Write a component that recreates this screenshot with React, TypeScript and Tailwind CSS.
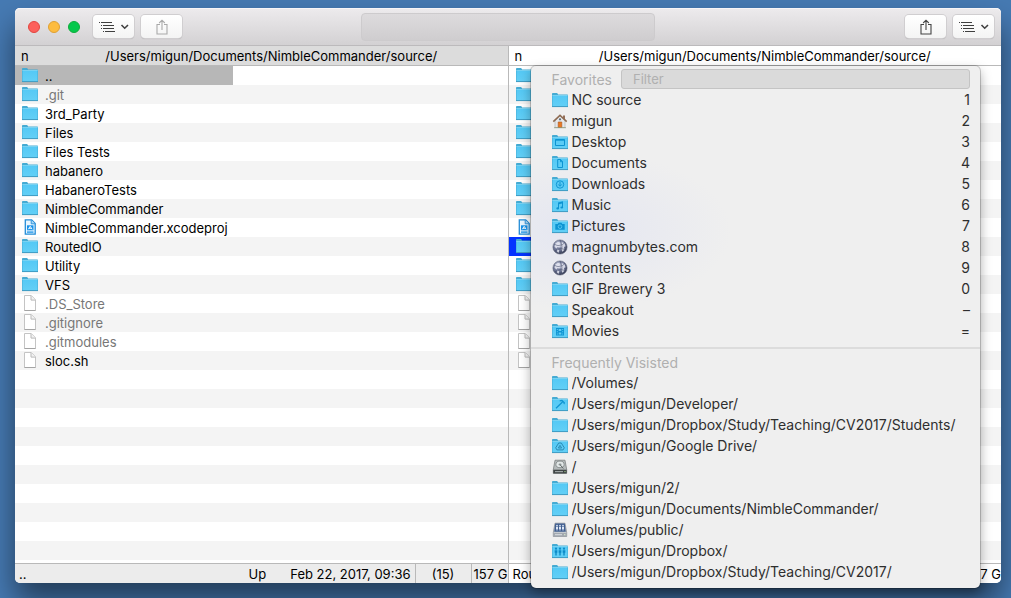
import { useState, type ReactNode } from "react";
import clsx from "clsx";

type Glyph =
  | "desktop"
  | "document"
  | "download"
  | "music"
  | "camera"
  | "film"
  | "hammer"
  | "drive"
  | "people";

type IconName = "folder" | "project" | "file" | "home" | "globe" | "disk" | "netdisk" | Glyph;

interface Entry {
  name: string;
  icon: IconName;
  hidden?: boolean;
}

interface Place {
  label: string;
  icon: IconName;
  shortcut?: string;
}

const PATH = "/Users/migun/Documents/NimbleCommander/source/";

const ENTRIES: Entry[] = [
  { name: "..", icon: "folder" },
  { name: ".git", icon: "folder", hidden: true },
  { name: "3rd_Party", icon: "folder" },
  { name: "Files", icon: "folder" },
  { name: "Files Tests", icon: "folder" },
  { name: "habanero", icon: "folder" },
  { name: "HabaneroTests", icon: "folder" },
  { name: "NimbleCommander", icon: "folder" },
  { name: "NimbleCommander.xcodeproj", icon: "project" },
  { name: "RoutedIO", icon: "folder" },
  { name: "Utility", icon: "folder" },
  { name: "VFS", icon: "folder" },
  { name: ".DS_Store", icon: "file", hidden: true },
  { name: ".gitignore", icon: "file", hidden: true },
  { name: ".gitmodules", icon: "file", hidden: true },
  { name: "sloc.sh", icon: "file" },
];

const ROW_COUNT = 26;

const FAVORITES: Place[] = [
  { label: "NC source", icon: "folder", shortcut: "1" },
  { label: "migun", icon: "home", shortcut: "2" },
  { label: "Desktop", icon: "desktop", shortcut: "3" },
  { label: "Documents", icon: "document", shortcut: "4" },
  { label: "Downloads", icon: "download", shortcut: "5" },
  { label: "Music", icon: "music", shortcut: "6" },
  { label: "Pictures", icon: "camera", shortcut: "7" },
  { label: "magnumbytes.com", icon: "globe", shortcut: "8" },
  { label: "Contents", icon: "globe", shortcut: "9" },
  { label: "GIF Brewery 3", icon: "folder", shortcut: "0" },
  { label: "Speakout", icon: "folder", shortcut: "–" },
  { label: "Movies", icon: "film", shortcut: "=" },
];

const FREQUENT: Place[] = [
  { label: "/Volumes/", icon: "folder" },
  { label: "/Users/migun/Developer/", icon: "hammer" },
  { label: "/Users/migun/Dropbox/Study/Teaching/CV2017/Students/", icon: "folder" },
  { label: "/Users/migun/Google Drive/", icon: "drive" },
  { label: "/", icon: "disk" },
  { label: "/Users/migun/2/", icon: "folder" },
  { label: "/Users/migun/Documents/NimbleCommander/", icon: "folder" },
  { label: "/Volumes/public/", icon: "netdisk" },
  { label: "/Users/migun/Dropbox/", icon: "people" },
  { label: "/Users/migun/Dropbox/Study/Teaching/CV2017/", icon: "folder" },
];

const GLYPHS: Record<Glyph, ReactNode> = {
  desktop: <path d="M3.5 5.5h9v6h-9zM3.5 6.2h9" fill="none" stroke="#0d94d2" />,
  document: (
    <path d="M5.7 4.5h3l1.8 2v6H5.7zM8.5 4.5v2.2h2" fill="none" stroke="#0d94d2" />
  ),
  download: (
    <g fill="none" stroke="#0d94d2">
      <circle cx="8" cy="8.5" r="3.7" />
      <path d="M8 6v4M6.2 8.4 8 10.3l1.8-1.9" />
    </g>
  ),
  music: (
    <g fill="#0d94d2">
      <path d="M6 5.5 11 4.3v6h-1V6.6L7 7.3v4H6z" />
      <ellipse cx="5.7" cy="11.4" rx="1.4" ry="1.1" />
      <ellipse cx="9.8" cy="10.5" rx="1.4" ry="1.1" />
    </g>
  ),
  camera: (
    <g fill="#0d94d2">
      <path d="M3.3 6h2.4l.8-1.3h3L10.3 6h2.4v5.7H3.3z" />
      <circle cx="8" cy="8.7" r="1.8" fill="none" stroke="#58c8f3" strokeWidth=".9" />
    </g>
  ),
  film: (
    <g fill="#0d94d2">
      <path d="M4 5h8v7.5H4z" />
      <path
        d="M4.8 5.9h1v1h-1zM4.8 8.2h1v1h-1zM4.8 10.6h1v1h-1zM10.2 5.9h1v1h-1zM10.2 8.2h1v1h-1zM10.2 10.6h1v1h-1zM6.7 6h2.6v2H6.7zM6.7 9.4h2.6v2H6.7z"
        fill="#62cdf5"
      />
    </g>
  ),
  hammer: (
    <path d="M4 12.2 10.5 6M7.7 4.8l2.2-.3 2.4 2.3-.3 1.4" fill="none" stroke="#0d94d2" strokeWidth="1.2" />
  ),
  drive: (
    <path
      d="M6.7 5h2.6l3 4.8-1.2 2.1H4.9L3.7 9.8zM8 7.3 6.4 10h3.2z"
      fill="none"
      stroke="#2583ad"
      strokeWidth=".9"
    />
  ),
  people: (
    <g fill="#0d8bc7">
      <circle cx="4" cy="5.7" r="1.1" />
      <circle cx="8" cy="5.7" r="1.1" />
      <circle cx="12" cy="5.7" r="1.1" />
      <path d="M2.7 7.3h2.6v2.5h-.6v2.7H3.3V9.8h-.6zM6.7 7.3h2.6v2.5h-.6v2.7H7.3V9.8h-.6zM10.7 7.3h2.6v2.5h-.6v2.7h-1.4V9.8h-.6z" />
    </g>
  ),
};

function Folder({ glyph }: { glyph?: Glyph }) {
  return (
    <svg viewBox="0 0 16 16" className="size-4 shrink-0" aria-hidden="true">
      <path d="M0 2q0-.9.8-.9h4q.5 0 .8.5l.5.8h9.2q.7 0 .7.7V15H0z" fill="#45abd3" />
      <path d="M.5 4h15v10.3H.5z" fill="url(#folder-front)" />
      <path d="M.3 3.5h15.4" stroke="#86dcfa" strokeWidth=".8" />
      <path d="M0 14.6h16" stroke="#3d97bd" strokeWidth=".8" />
      {glyph && GLYPHS[glyph]}
    </svg>
  );
}

function Icon({ name }: { name: IconName }) {
  switch (name) {
    case "folder":
      return <Folder />;
    case "file":
      return (
        <svg viewBox="0 0 16 16" className="size-4 shrink-0" aria-hidden="true">
          <path d="M2.5.5h6.8l4.2 4.3v10.7h-11z" fill="#fff" stroke="#c4c4c4" />
          <path d="M9 .8v4.3h4.3" fill="#f1f1f1" stroke="#b9b9b9" />
          <path d="M2.5 15.5h11" stroke="#a4a4a4" />
        </svg>
      );
    case "project":
      return (
        <svg viewBox="0 0 16 16" className="size-4 shrink-0" aria-hidden="true">
          <path d="M3.3.8h6.4l3.5 3.6v10.8H3.3z" fill="#e9f6ff" stroke="#258dd8" strokeWidth="1.3" />
          <path d="M9.2 1v3.8H13" fill="#a8d8f7" stroke="#258dd8" strokeWidth=".9" />
          <path d="M5 6.3h6.5v5H5z" fill="#1792ea" />
          <path d="m6.3 10.3 1.9-3 1.9 3M6.9 9.3h2.7" fill="none" stroke="#fff" strokeWidth=".9" />
          <path d="M5 13.1h6.5" stroke="#1792ea" strokeWidth="1.3" />
        </svg>
      );
    case "home":
      return (
        <svg viewBox="0 0 16 16" className="size-4 shrink-0" aria-hidden="true">
          <path d="M11 2.5h2V6h-2z" fill="#94705c" />
          <path d="M3 8l5-5 5 5v6.5H3z" fill="#e4e7ea" stroke="#a7a9ab" strokeWidth=".6" />
          <path d="M1.3 8.6 8 2.2l6.7 6.4" fill="none" stroke="#8e6a50" strokeWidth="1.5" />
          <path d="M6.2 9h3.6v5.5H6.2z" fill="#e87922" stroke="#a95420" strokeWidth=".6" />
          <circle cx="8" cy="6.3" r="1.1" fill="#5e6873" />
          <path d="M2 14.7h12" stroke="#8b9a78" strokeWidth=".8" />
        </svg>
      );
    case "globe":
      return (
        <svg viewBox="0 0 16 16" className="size-4 shrink-0" aria-hidden="true">
          <circle cx="8" cy="8" r="7.1" fill="url(#globe)" stroke="#50566d" strokeWidth=".5" />
          <path
            d="M3.3 4.5 6 2.7l2.5 1-1 1.8 1.6 1-1.7 2-2-.6-1 1.6-1.8-1.8zM9.5 3l2.9 1.1 1.2 3.1-1.6.7.4 2.8-1.8 2-1.5-1.9.6-2.6-1.3-1.5zM5.3 10l2 1.2-.6 2.5-1.6-1z"
            fill="#e6e8f2"
            opacity=".85"
          />
          <path d="M3 11.8Q8 8 13.8 11M2 5Q8 9 13 3.4M8 1q4 7 0 14" fill="none" stroke="#3e4663" strokeWidth=".5" />
        </svg>
      );
    case "disk":
      return (
        <svg viewBox="0 0 16 16" className="size-4 shrink-0" aria-hidden="true">
          <path d="M3 1.2h10l1.7 9.3v3.8H1.3v-3.8z" fill="#b5babb" stroke="#747979" strokeWidth=".7" />
          <ellipse cx="8" cy="5.4" rx="4.1" ry="3.3" fill="#e2e7e7" stroke="#7a8080" strokeWidth=".8" />
          <ellipse cx="8" cy="5.4" rx="1.5" ry="1" fill="#8a9191" />
          <path d="m8.3 6 3 3.5" stroke="#606868" />
          <path d="M1.3 10.7h13.4v3.8H1.3z" fill="#3f4444" />
          <path d="M3 12.6h8" stroke="#9da3a3" strokeWidth="1.2" />
          <circle cx="13" cy="12.6" r=".6" fill="#b9ef9f" />
        </svg>
      );
    case "netdisk":
      return (
        <svg viewBox="0 0 16 16" className="size-4 shrink-0" aria-hidden="true">
          <path d="M3 1.2h10l1.7 9.3v4H1.3v-4z" fill="#c5cacf" stroke="#858a90" strokeWidth=".7" />
          <path d="M3.2 1.6h9.6l1 8.2H2.2z" fill="#405f91" />
          <g fill="#eef4ff">
            <circle cx="5" cy="3.6" r=".8" />
            <circle cx="8" cy="3.6" r=".8" />
            <circle cx="11" cy="3.6" r=".8" />
            <path d="M4.1 4.8h1.8V7h-.4v1.6h-1V7h-.4zM7.1 4.8h1.8V7h-.4v1.6h-1V7h-.4zM10.1 4.8h1.8V7h-.4v1.6h-1V7h-.4z" />
          </g>
          <path d="M1.4 11h13.2v3.4H1.4z" fill="#a3a9b0" />
          <path d="M3 12.7h7" stroke="#d9dde2" />
          <circle cx="12.8" cy="12.7" r=".6" fill="#e9ffd8" />
        </svg>
      );
    default:
      return <Folder glyph={name} />;
  }
}

function ListIcon() {
  return (
    <svg viewBox="0 0 30 12" className="h-3 w-[30px]" fill="none" stroke="#3f3f3f" aria-hidden="true">
      <path d="M0 1.5h1M2 1.5h11M2 4.5h1M4 4.5h11M2 7.5h1M4 7.5h11M4 10.5h1M6 10.5h10" />
      <path d="m22.5 4 3.2 3.2L29 4" strokeWidth="1.6" />
    </svg>
  );
}

function ShareIcon() {
  return (
    <svg viewBox="0 0 12 16" className="h-4 w-3" fill="none" stroke="currentColor" aria-hidden="true">
      <path d="M4 5.5H1v9.5h10V5.5H8M6 11V1.2M3.2 4 6 1.2 8.8 4" strokeWidth="1.1" />
    </svg>
  );
}

function ToolbarButton({ label, dim, children }: { label: string; dim?: boolean; children: ReactNode }) {
  return (
    <button
      type="button"
      aria-label={label}
      className={clsx(
        "flex h-[23px] w-[41px] items-center justify-center rounded-[4px] bg-linear-to-b from-white to-[#f4f4f4] shadow-[0_0_0_1px_#d0ced0,0_1px_1px_0_#a9a7a9]",
        dim ? "text-[#a9a9a9]" : "text-[#444]",
      )}
    >
      {children}
    </button>
  );
}

function Toolbar() {
  return (
    <header className="grid h-[38px] grid-cols-[1fr_294px_1fr] items-center rounded-t-[5px] border-b border-[#bcbabc] bg-linear-to-b from-[#edebed] to-[#d3d1d3] shadow-[inset_0_1px_0_#f7f5f7]">
      <div className="flex items-center pl-[13px]">
        <div className="mr-[13px] flex gap-2">
          <button type="button" aria-label="Close" className="size-3 rounded-full border border-[#e2463f] bg-[#fc605b]" />
          <button type="button" aria-label="Minimize" className="size-3 rounded-full border border-[#e0a033] bg-[#fdbc40]" />
          <button type="button" aria-label="Zoom" className="size-3 rounded-full border border-[#0fac3c] bg-[#05c84b]" />
        </div>
        <div className="flex gap-[7px]">
          <ToolbarButton label="Go to, left panel">
            <ListIcon />
          </ToolbarButton>
          <ToolbarButton label="Share, left panel" dim>
            <ShareIcon />
          </ToolbarButton>
        </div>
      </div>
      <div className="h-7 rounded-[4px] border border-[#cdcbcd] bg-linear-to-b from-[#dddbdd] to-[#cfcdcf]" />
      <div className="flex justify-end gap-[7px] pr-[7px]">
        <ToolbarButton label="Share, right panel">
          <ShareIcon />
        </ToolbarButton>
        <ToolbarButton label="Go to, right panel">
          <ListIcon />
        </ToolbarButton>
      </div>
    </header>
  );
}

function Panel({
  selected,
  focused,
  itemName,
  menu,
}: {
  selected: number;
  focused?: boolean;
  itemName: string;
  menu?: ReactNode;
}) {
  const rows = Array.from({ length: ROW_COUNT }, (_, i) => ENTRIES[i]);
  // an open menu lies over the names and the middle of the status bar
  const covered = menu ? "invisible" : undefined;

  return (
    <section className="relative flex min-w-0 flex-1 flex-col">
      <div
        className={clsx(
          "flex h-5 items-center border-b border-[#b9b9b9] pl-[6px] leading-5",
          focused ? "bg-white" : "bg-[#dcdcdc]",
        )}
      >
        <button type="button" className="w-[14px] text-left">
          n
        </button>
        <h2 className="min-w-0 flex-1 truncate text-center">{PATH}</h2>
      </div>
      <ul className="grow pb-[3px]">
        {rows.map((entry, i) => (
          <li key={i} className="h-[19px] even:bg-[#f4f4f4]">
            {entry && (
              <div
                className={clsx(
                  "flex h-full w-[218px] items-start gap-[7px] pt-px pl-[7px] leading-[19px] whitespace-nowrap",
                  i === selected && (focused ? "bg-[#0433ff]" : "bg-[#b7b7b7]"),
                  entry.hidden && "text-[#777]",
                )}
              >
                <Icon name={entry.icon} />
                <span className={covered}>{entry.name}</span>
              </div>
            )}
          </li>
        ))}
      </ul>
      <footer
        className={clsx(
          "flex h-5 overflow-hidden border-t border-[#b9b9b9] leading-5 whitespace-nowrap",
          focused ? "rounded-br-[5px] bg-white" : "rounded-bl-[5px] bg-[#ececec]",
        )}
      >
        <span className="grow pl-1">{itemName}</span>
        <span className={clsx("pr-6", covered)}>Up</span>
        <span className={clsx("pr-1", covered)}>Feb 22, 2017, 09:36</span>
        <span className={clsx("w-14 border-l border-[#b9b9b9] text-center", covered)}>(15)</span>
        <span className="w-[37px] overflow-hidden border-l border-[#b9b9b9] pl-[2px]">157 G</span>
      </footer>
      {menu}
    </section>
  );
}

function PlaceList({ places }: { places: Place[] }) {
  return (
    <ul>
      {places.map((place) => (
        <li key={place.label}>
          <button type="button" className="flex h-[21px] w-full items-center gap-1 pr-[10px] pl-[21px] text-left">
            <Icon name={place.icon} />
            <span className="grow truncate">{place.label}</span>
            {place.shortcut && <kbd className="font-[inherit] text-[14px]">{place.shortcut}</kbd>}
          </button>
        </li>
      ))}
    </ul>
  );
}

function GoToMenu() {
  const [filter, setFilter] = useState("");
  const match = (p: Place) => p.label.toLowerCase().includes(filter.toLowerCase());

  return (
    <div className="absolute top-5 right-[21px] left-[22px] rounded-[5px] bg-[#efefef] bg-[radial-gradient(ellipse_150px_80px_at_50px_165px,#e4e6f1,#efefef00)] pt-[3px] pb-[6px] text-[14px] text-[#2e2e2e] shadow-[0_0_0_1px_rgba(0,0,0,0.18),0_5px_12px_rgba(0,0,0,0.35)]">
      <div className="flex h-5 items-center gap-[9px] pr-[10px] pl-[21px]">
        <label htmlFor="filter" className="text-[#b0b0b0]">
          Favorites
        </label>
        <input
          id="filter"
          value={filter}
          onChange={(e) => setFilter(e.target.value)}
          placeholder="Filter"
          className="h-5 min-w-0 flex-1 rounded-[3px] border border-[#c4c4c4] bg-[#dadada] px-[11px] text-[13px] leading-[18px] outline-none placeholder:text-[#b0b0b0]"
        />
      </div>
      <PlaceList places={FAVORITES.filter(match)} />
      <hr className="mt-[6px] mb-1 border-t-2 border-[#dcdcdc]" />
      <h3 className="h-[19px] pl-[21px] leading-[19px] text-[#b0b0b0]">Frequently Visisted</h3>
      <PlaceList places={FREQUENT.filter(match)} />
    </div>
  );
}

export default function App() {
  return (
    <div className="min-h-screen overflow-hidden bg-[#467ab3] pt-2 pr-[10px] pb-[15px] pl-[15px] font-['Inter',sans-serif] text-[13px] text-black">
      <svg className="absolute size-0" aria-hidden="true">
        <defs>
          <linearGradient id="folder-front" x1="0" y1="0" x2="0" y2="1">
            <stop offset="0" stopColor="#55c9f5" />
            <stop offset="1" stopColor="#62cff6" />
          </linearGradient>
          <radialGradient id="globe" cx=".38" cy=".3" r=".75">
            <stop offset="0" stopColor="#b9bfd6" />
            <stop offset=".6" stopColor="#68708f" />
            <stop offset="1" stopColor="#33384f" />
          </radialGradient>
        </defs>
      </svg>
      <main className="rounded-[5px] bg-white shadow-[0_18px_30px_rgba(0,0,0,0.5)]">
        <Toolbar />
        <div className="flex divide-x divide-[#b9b9b9]">
          <Panel selected={0} itemName=".." />
          <Panel selected={9} itemName="RoutedIO" focused menu={<GoToMenu />} />
        </div>
      </main>
    </div>
  );
}
